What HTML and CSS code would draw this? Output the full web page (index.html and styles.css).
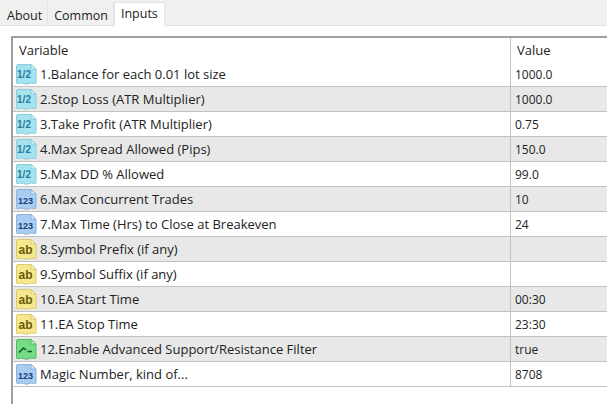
FILE: index.html
```html
<!DOCTYPE html>
<html lang="en">
<head>
  <meta charset="UTF-8">
  <meta name="viewport" content="width=device-width, initial-scale=1.0">
  <title>Inputs</title>
  <link rel="stylesheet" href="styles.css">
</head>
<body>

  <svg class="defs" width="0" height="0">
    <defs>
      <g id="sheet">
        <path class="body" d="M1.5 3 Q1.5 1.5 3 1.5 H16 L21 6 V19.5 Q21 21 19.5 20.5 Q16.5 19.5 14.5 20.5 Q11.5 22 8.5 20.5 Q5.5 19.5 3 20.5 Q1.5 21 1.5 19.5 Z"/>
        <path class="fold" d="M16 1.5 V6 H21 Z"/>
      </g>
    </defs>
  </svg>

  <div class="tabs">
    <div class="tab">About</div>
    <div class="tab">Common</div>
    <div class="tab active">Inputs</div>
  </div>

  <div class="panel">
    <div class="head">
      <div class="name">Variable</div>
      <div class="value">Value</div>
    </div>

    <div class="row">
      <div class="name"><svg class="icon frac" viewBox="0 0 23 23"><use href="#sheet"/><text x="9" y="15">1/2</text></svg>1.Balance for each 0.01 lot size</div>
      <div class="value">1000.0</div>
    </div>
    <div class="row alt">
      <div class="name"><svg class="icon frac" viewBox="0 0 23 23"><use href="#sheet"/><text x="9" y="15">1/2</text></svg>2.Stop Loss (ATR Multiplier)</div>
      <div class="value">1000.0</div>
    </div>
    <div class="row">
      <div class="name"><svg class="icon frac" viewBox="0 0 23 23"><use href="#sheet"/><text x="9" y="15">1/2</text></svg>3.Take Profit (ATR Multiplier)</div>
      <div class="value">0.75</div>
    </div>
    <div class="row alt">
      <div class="name"><svg class="icon frac" viewBox="0 0 23 23"><use href="#sheet"/><text x="9" y="15">1/2</text></svg>4.Max Spread Allowed (Pips)</div>
      <div class="value">150.0</div>
    </div>
    <div class="row">
      <div class="name"><svg class="icon frac" viewBox="0 0 23 23"><use href="#sheet"/><text x="9" y="15">1/2</text></svg>5.Max DD % Allowed</div>
      <div class="value">99.0</div>
    </div>
    <div class="row alt">
      <div class="name"><svg class="icon int" viewBox="0 0 23 23"><use href="#sheet"/><text x="10.5" y="16">123</text></svg>6.Max Concurrent Trades</div>
      <div class="value">10</div>
    </div>
    <div class="row">
      <div class="name"><svg class="icon int" viewBox="0 0 23 23"><use href="#sheet"/><text x="10.5" y="16">123</text></svg>7.Max Time (Hrs) to Close at Breakeven</div>
      <div class="value">24</div>
    </div>
    <div class="row alt">
      <div class="name"><svg class="icon str" viewBox="0 0 23 23"><use href="#sheet"/><text x="10.5" y="15.5">ab</text></svg>8.Symbol Prefix (if any)</div>
      <div class="value"></div>
    </div>
    <div class="row">
      <div class="name"><svg class="icon str" viewBox="0 0 23 23"><use href="#sheet"/><text x="10.5" y="15.5">ab</text></svg>9.Symbol Suffix (if any)</div>
      <div class="value"></div>
    </div>
    <div class="row alt">
      <div class="name"><svg class="icon str" viewBox="0 0 23 23"><use href="#sheet"/><text x="10.5" y="15.5">ab</text></svg>10.EA Start Time</div>
      <div class="value">00:30</div>
    </div>
    <div class="row">
      <div class="name"><svg class="icon str" viewBox="0 0 23 23"><use href="#sheet"/><text x="10.5" y="15.5">ab</text></svg>11.EA Stop Time</div>
      <div class="value">23:30</div>
    </div>
    <div class="row alt">
      <div class="name"><svg class="icon bool" viewBox="0 0 23 23"><use href="#sheet"/><path class="mark" d="M4 14.5 L8.5 10 L11 12 M12.5 13.5 H17"/></svg>12.Enable Advanced Support/Resistance Filter</div>
      <div class="value">true</div>
    </div>
    <div class="row">
      <div class="name"><svg class="icon int" viewBox="0 0 23 23"><use href="#sheet"/><text x="10.5" y="16">123</text></svg>Magic Number, kind of...</div>
      <div class="value">8708</div>
    </div>
  </div>

</body>
</html>
```

FILE: styles.css
```css
/* General Styles */
body {
  margin: 0;
  overflow: hidden;
  background-color: #fff;
  color: #222;
  font-family: 'Open Sans', 'Liberation Sans', sans-serif;
  font-size: 13px;
}

.defs {
  position: absolute;
}

/* Tab strip */
.tabs {
  display: flex;
  align-items: flex-end;
  height: 26px;
  background-color: #f0f0f0;
  border-bottom: 1px solid #e4e4e4;
  box-sizing: border-box;
  font-size: 12.5px;
}

.tab {
  height: 23px;
  line-height: 27px;
  padding: 0 5px 0 6px;
  border-right: 1px solid #e2e2e2;
  box-sizing: border-box;
}

.tab:first-child {
  padding-left: 7px;
}

.tab.active {
  height: 24px;
  line-height: 21px;
  padding: 0 6px;
  margin-bottom: -1px;
  background-color: #fff;
  border: 1px solid #e4e4e4;
  border-bottom: none;
}

/* Grid */
.panel {
  margin: 10px 0 0 11px;
  height: 366px;
  border-top: 2px solid #a0a0a0;
  border-left: 2px solid #a0a0a0;
}

.head, .row {
  display: grid;
  grid-template-columns: 498px 1fr;
  box-sizing: border-box;
}

.head {
  height: 24px;
  line-height: 25px;
}

.row {
  height: 25px;
  line-height: 25px;
  border-bottom: 1px solid #c2c2c2;
}

.row.alt {
  background-color: #e8e8e8;
}

.name {
  display: flex;
  align-items: center;
  padding-left: 6px;
  border-right: 1px solid #c2c2c2;
  white-space: nowrap;
}

.row .name {
  padding-left: 2px;
}

.value {
  padding-left: 6px;
}

.row .value {
  padding-left: 4px;
  font-size: 12px;
}

/* Type icons: the sheet is drawn through <use>, so colours come in as variables */
.icon {
  width: 23px;
  height: 23px;
  margin-right: 2px;
  flex: none;
}

.body {
  fill: var(--fill);
  stroke: var(--line);
}

.fold {
  fill: var(--corner);
  stroke: var(--line);
}

.icon text {
  font-family: 'Liberation Sans', Arial, sans-serif;
  text-anchor: middle;
  font-weight: bold;
}

.frac {
  --fill: #a5e3ef;
  --line: #8accdc;
  --corner: #dff5fa;
}

.frac text {
  font-size: 10px;
  fill: #2a7d9e;
}

.int {
  --fill: #a8cdf0;
  --line: #8ab2dc;
  --corner: #e0eefb;
}

.int text {
  font-size: 9px;
  fill: #123f80;
}

.str {
  --fill: #f6e88c;
  --line: #dcc96c;
  --corner: #fcf6cf;
}

.str text {
  font-size: 12px;
  fill: #6b5a10;
}

.bool {
  --fill: #74dc84;
  --line: #55b866;
  --corner: #d3f6d8;
}

.mark {
  fill: none;
  stroke: #14521f;
  stroke-width: 1.6;
}
```
